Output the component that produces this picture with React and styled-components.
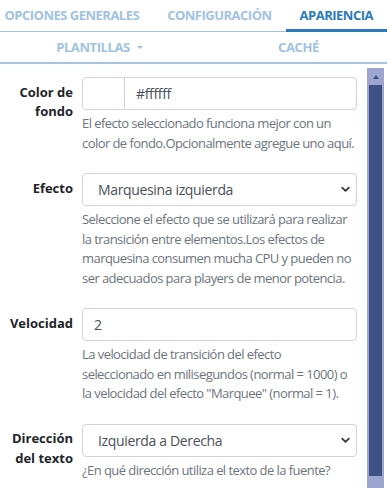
import React from 'react';
import styled, { createGlobalStyle } from 'styled-components';

const Global = createGlobalStyle`
  html, body { margin: 0; padding: 0; background: #fff; }
  body { font-family: "Open Sans", "Noto Sans", sans-serif; overflow: hidden; }
  * { box-sizing: border-box; }
`;

const Page = styled.div`
  width: 387px;
  height: 488px;
  overflow: hidden;
  display: flex;
  flex-direction: column;
`;

const TabBar = styled.nav`
  display: flex;
  justify-content: flex-end;
  height: 32px;
  flex-shrink: 0;
  border-bottom: 1px solid #a3c5e2;
`;

const Tab = styled.div`
  flex-shrink: 0;
  padding: 0 14px;
  display: flex;
  align-items: center;
  font-size: 13px;
  font-weight: 700;
  letter-spacing: -0.5px;
  text-transform: uppercase;
  white-space: nowrap;
  color: ${p => (p.$active ? '#2a7abd' : '#a0c3e0')};
  border-bottom: 3px solid ${p => (p.$active ? '#2a7abd' : 'transparent')};
  margin-bottom: -1px;
`;

const SubNav = styled.nav`
  display: grid;
  grid-template-columns: 199px 199px;
  height: 32px;
  flex-shrink: 0;
  border-bottom: 2px solid #a3c5e2;
`;

const SubItem = styled.div`
  display: flex;
  align-items: center;
  justify-content: center;
  font-size: 13px;
  font-weight: 700;
  letter-spacing: -0.4px;
  text-transform: uppercase;
  color: #a0c3e0;
  white-space: nowrap;
`;

const Caret = styled.span`
  display: inline-block;
  margin-left: 7px;
  border-left: 3px solid transparent;
  border-right: 3px solid transparent;
  border-top: 3px solid #a0c3e0;
`;

const Body = styled.div`
  flex: 1;
  display: flex;
  min-height: 0;
`;

const Content = styled.div`
  flex: 1;
  padding: 13px 10px 0 0;
  overflow: hidden;
`;

const ScrollTrack = styled.div`
  width: 17px;
  margin: 4px 3px 0 0;
  background: #9ba5cf;
  display: flex;
  flex-direction: column;
  align-items: center;
  padding: 0 2px;
`;

const ScrollArrow = styled.div`
  height: 17px;
  display: flex;
  align-items: center;
  justify-content: center;
  &::before {
    content: '';
    border-left: 3.5px solid transparent;
    border-right: 3.5px solid transparent;
    border-bottom: 4px solid #3f5086;
  }
`;

const ScrollThumb = styled.div`
  width: 13px;
  height: 391px;
  background: #3f5086;
`;

const FormRow = styled.div`
  display: grid;
  grid-template-columns: 73px 275px;
  column-gap: 9px;
  margin-bottom: 20px;
`;

const Label = styled.label`
  text-align: right;
  font-size: 13px;
  font-weight: 700;
  line-height: 19.5px;
  color: #212529;
  padding-top: 5.5px;
`;

const Field = styled.div`
  display: flex;
  flex-direction: column;
`;

const Box = styled.div`
  height: 33px;
  border: 1px solid #ced4da;
  border-radius: 4px;
  display: flex;
  align-items: center;
  font-size: 14px;
  letter-spacing: -0.35px;
  color: #495057;
  background: #fff;
  padding-left: ${p => p.$pad || 11}px;
  padding-right: 6px;
`;

const Swatch = styled.div`
  width: 31px;
  align-self: stretch;
  border-right: 1px solid #ced4da;
  margin-right: 11px;
`;

const Value = styled.span`
  flex: 1;
`;

const Help = styled.div`
  margin-top: 4px;
  font-size: 13px;
  letter-spacing: -0.56px;
  line-height: 19.5px;
  color: #6c757d;
`;

const Chevron = () => (
  <svg width="9" height="7" viewBox="0 0 9 7">
    <path d="M1.2 1.6 L4.5 4.9 L7.8 1.6" fill="none" stroke="#343a40" strokeWidth="1.8" strokeLinecap="round" strokeLinejoin="round" />
  </svg>
);

export default function App() {
  return (
    <Page>
      <Global />
      <TabBar>
        <Tab>Opciones generales</Tab>
        <Tab>Configuración</Tab>
        <Tab $active>Apariencia</Tab>
      </TabBar>
      <SubNav>
        <SubItem>Plantillas<Caret /></SubItem>
        <SubItem>Caché</SubItem>
      </SubNav>
      <Body>
        <Content>
          <FormRow>
            <Label>Color de fondo</Label>
            <Field>
              <Box $pad={0}>
                <Swatch />
                <Value>#ffffff</Value>
              </Box>
              <Help>El efecto seleccionado funciona mejor con un color de fondo.Opcionalmente agregue uno aquí.</Help>
            </Field>
          </FormRow>
          <FormRow>
            <Label>Efecto</Label>
            <Field>
              <Box $pad={15}>
                <Value>Marquesina izquierda</Value>
                <Chevron />
              </Box>
              <Help>Seleccione el efecto que se utilizará para realizar la transición entre elementos.Los efectos de marquesina consumen mucha CPU y pueden no ser adecuados para players de menor potencia.</Help>
            </Field>
          </FormRow>
          <FormRow>
            <Label>Velocidad</Label>
            <Field>
              <Box>
                <Value>2</Value>
              </Box>
              <Help>
                La velocidad de transición del efecto<br />
                seleccionado en milisegundos (normal = 1000) o<br />
                la velocidad del efecto "Marquee" (normal = 1).
              </Help>
            </Field>
          </FormRow>
          <FormRow>
            <Label>Dirección del texto</Label>
            <Field>
              <Box $pad={15}>
                <Value>Izquierda a Derecha</Value>
                <Chevron />
              </Box>
              <Help>¿En qué dirección utiliza el texto de la fuente?</Help>
            </Field>
          </FormRow>
        </Content>
        <ScrollTrack>
          <ScrollArrow />
          <ScrollThumb />
        </ScrollTrack>
      </Body>
    </Page>
  );
}
